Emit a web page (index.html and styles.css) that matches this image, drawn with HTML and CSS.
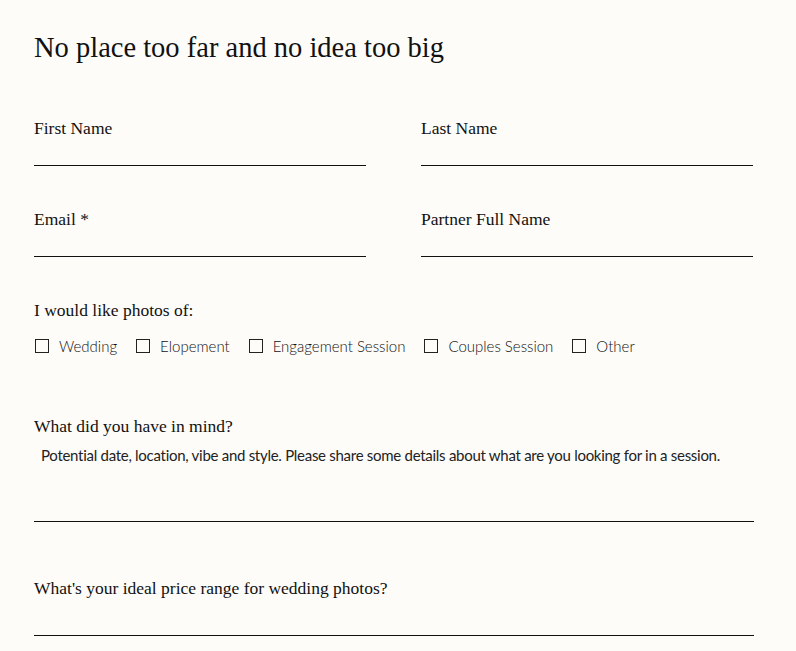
FILE: index.html
```html
<!DOCTYPE html>
<html>
<head>
<meta charset="utf-8">
<link rel="stylesheet" href="styles.css">
</head>
<body>
<main class="form">
  <h1 class="title">No place too far and no idea too big</h1>
  <div class="grid">
    <div class="field">
      <label class="label">First Name</label>
      <div class="line"></div>
    </div>
    <div class="field">
      <label class="label">Last Name</label>
      <div class="line"></div>
    </div>
    <div class="field">
      <label class="label">Email *</label>
      <div class="line"></div>
    </div>
    <div class="field">
      <label class="label">Partner Full Name</label>
      <div class="line"></div>
    </div>
  </div>
  <div class="photos">
    <div class="label">I would like photos of:</div>
    <div class="checks">
      <span class="check"><span class="box"></span>Wedding</span>
      <span class="check"><span class="box"></span>Elopement</span>
      <span class="check"><span class="box"></span>Engagement Session</span>
      <span class="check"><span class="box"></span>Couples Session</span>
      <span class="check"><span class="box"></span>Other</span>
    </div>
  </div>
  <div class="mind">
    <div class="label">What did you have in mind?</div>
    <div class="placeholder">Potential date, location, vibe and style. Please share some details about what are you looking for in a session.</div>
    <div class="line wide"></div>
  </div>
  <div class="price">
    <div class="label">What's your ideal price range for wedding photos?</div>
    <div class="line wide"></div>
  </div>
</main>
</body>
</html>
```
FILE: styles.css
```css
html, body {
  margin: 0;
  padding: 0;
  background: #fdfcf9;
}
.form {
  padding: 30px 42px 0 34px;
  color: #111;
}
.title {
  margin: 0;
  font-family: "Liberation Serif", serif;
  font-weight: normal;
  font-size: 28.5px;
  line-height: 36px;
}
.grid {
  display: grid;
  grid-template-columns: 332px 332px;
  column-gap: 55px;
  row-gap: 43px;
  margin-top: 52px;
}
.label {
  display: block;
  font-family: "Liberation Serif", serif;
  font-size: 17.5px;
  line-height: 20px;
  color: #111;
}
.line {
  height: 1px;
  background: #111;
  margin-top: 27px;
}
.photos {
  margin-top: 43px;
}
.checks {
  display: flex;
  gap: 18px;
  margin-top: 16px;
  font-family: Lato, sans-serif;
  font-weight: 300;
  font-size: 15px;
  color: #111;
  line-height: 20px;
}
.check {
  display: flex;
  align-items: center;
}
.box {
  width: 12px;
  height: 12px;
  border: 1px solid #222;
  margin-left: 1px;
  margin-right: 10px;
}
.mind {
  margin-top: 60px;
}
.placeholder {
  margin-top: 9px;
  padding-left: 7px;
  font-family: Lato, sans-serif;
  font-size: 15px;
  line-height: 20px;
  color: #222;
  letter-spacing: -0.28px;
}
.mind .line {
  margin-top: 56px;
}
.wide {
  width: 720px;
}
.price {
  margin-top: 56px;
}
.price .line {
  margin-top: 37px;
}
```
